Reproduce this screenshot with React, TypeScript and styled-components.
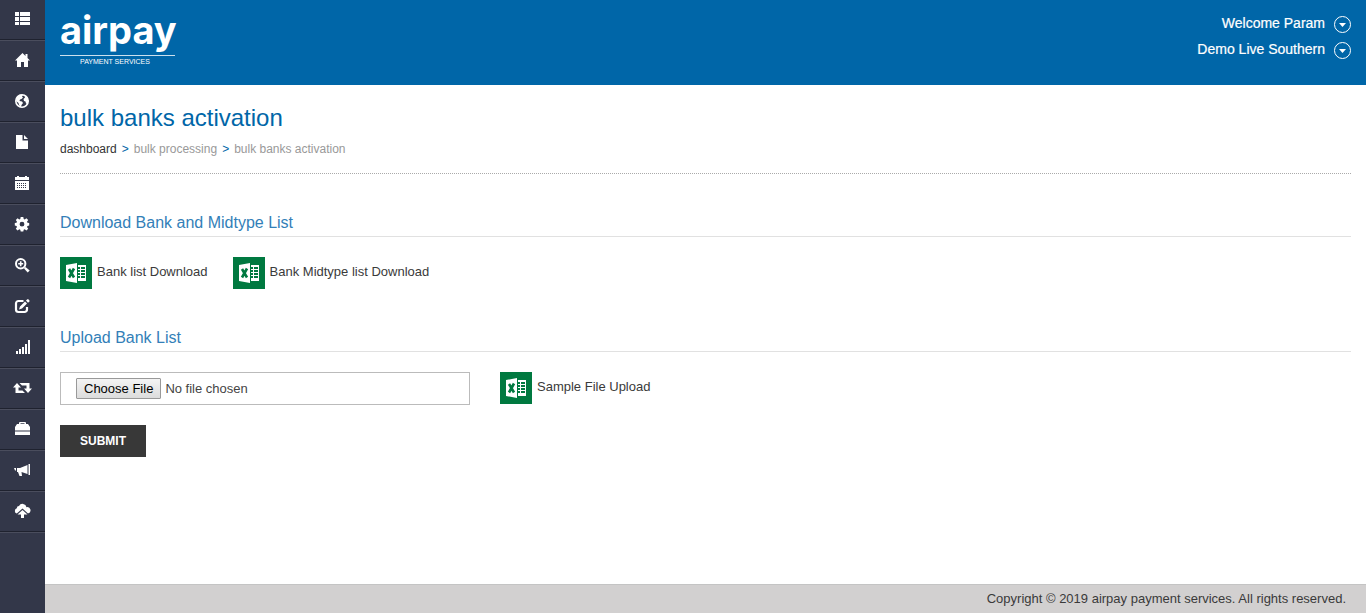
import React from "react";
import styled, { createGlobalStyle } from "styled-components";

const GlobalStyle = createGlobalStyle`
  *, *::before, *::after { box-sizing: border-box; }
  body {
    margin: 0;
    background: #fff;
    color: #3a3a3a;
    font: 13px/18px "Liberation Sans", Arial, Helvetica, sans-serif;
  }
  a { color: inherit; text-decoration: none; }
`;

const Page = styled.div`
  display: flex;
  min-height: 100vh;
`;

const Sidebar = styled.nav`
  flex: 0 0 45px;
  background: #333749;
`;

const MenuList = styled.ul`
  margin: 0;
  padding: 0;
  list-style: none;
  border-bottom: 1px solid #4a4d5d;
`;

const MenuItem = styled.li`
  border-top: 1px solid #4a4d5d;
  border-bottom: 1px solid #1f222f;
  &:first-child { border-top: 0; }
`;

const MenuLink = styled.a`
  display: flex;
  align-items: center;
  justify-content: center;
  height: 39px;
  padding-bottom: 2px;
  color: #fff;
  svg { overflow: visible; }
`;

const Column = styled.div`
  flex: 1;
  min-width: 0;
  display: flex;
  flex-direction: column;
`;

const Header = styled.header`
  display: flex;
  justify-content: space-between;
  min-height: 85px;
  padding: 11px 15px;
  background: #0066a8;
  color: #fff;
`;

const Logo = styled.a`
  display: block;
  height: 60px;
  svg { overflow: visible; }
`;

const Account = styled.div`
  display: flex;
  flex-direction: column;
  align-items: flex-end;
`;

const AccountButton = styled.button`
  display: flex;
  gap: 9px;
  height: 26px;
  padding: 3px 0 0;
  border: 0;
  background: none;
  color: inherit;
  font: 14px/18px "Liberation Sans", Arial, sans-serif;
  -webkit-text-stroke: 0.2px #fff;
  cursor: pointer;
  svg { margin-top: 2px; }
`;

const Main = styled.main`
  flex: 1;
  padding: 19px 15px 40px;
`;

const Title = styled.h1`
  margin: 0;
  color: #0066a8;
  font-size: 24px;
  font-weight: 400;
  line-height: 28px;
`;

const Crumbs = styled.nav`
  display: flex;
  gap: 5px;
  padding: 8px 0 15px;
  border-bottom: 1px dotted #aaa;
  color: #999;
  font-size: 12px;
  a { color: #333; }
  i { color: #0066a8; font-style: normal; }
`;

const Section = styled.section`
  padding-top: 39px;
`;

const SectionTitle = styled.h2`
  margin: 0 0 20px;
  padding-bottom: 3px;
  border-bottom: 1px solid #e1e1e1;
  color: #337fb8;
  font-size: 16px;
  font-weight: 400;
  line-height: 20px;
`;

const Row = styled.div<{ $gap: number }>`
  display: flex;
  gap: ${(p) => p.$gap}px;
`;

const SheetLink = styled.a`
  display: flex;
  gap: 5px;
  line-height: 30px;
`;

const FileInput = styled.input`
  width: 410px;
  height: 33px;
  padding: 5px 15px;
  border: 1px solid #bbb;
  background: #fff;
  color: #444;
  font: 13px/20px "Liberation Sans", Arial, sans-serif;
  &::file-selector-button {
    height: 21px;
    margin: 0 4px 0 0;
    padding: 0 7px;
    border: 1px solid #999;
    border-radius: 1px;
    background: linear-gradient(#f4f4f4, #dcdcdc);
    color: #000;
    font: 13px/19px "Liberation Sans", Arial, sans-serif;
  }
`;

const Submit = styled.button`
  margin-top: 20px;
  padding: 0 20px;
  height: 32px;
  border: 0;
  background: #383838;
  color: #fff;
  font: bold 12px/32px "Liberation Sans", Arial, sans-serif;
`;

const Footer = styled.footer`
  padding: 5px 20px;
  border-top: 1px solid #c4c4c4;
  background: #d2d0d0;
  text-align: right;
`;

const icons: [string, React.ReactNode][] = [
  ["Menu", <path d="M1 1h4v4H1zM6 1h10v4H6zM1 6h4v4H1zM6 6h10v4H6zM1 11h4v3H1zM6 11h10v3H6z" />],
  ["Home", <path d="M8.500 1 1 8.500h2V15h4v-5h3v5h4V8.500h2L13.500 6V2h-2v2z" />],
  ["Web", <><circle cx="8" cy="8" r="6.200" fill="none" stroke="currentColor" strokeWidth="1.600" /><path d="M3 4l3-2.500L9 2 8 3.500l1 1L7.500 6 6 6.500 5.500 8 8 8.500 9 10l-1.500 2L7 14.500 5 12 4.500 10 2 8zM10.500 2l3 2.500L14.500 8l-1 3-1.500-.5-.5-2L10 8l-.5-2L11 4.500z" /></>],
  ["Documents", <path d="M2 1h6.500v5.500H14V15H2zM10 1l4 4h-4z" />],
  ["Calendar", <path fillRule="evenodd" d="M1 2h2V1h2v1h6V1h2v1h2v3H1zM1 6h14v9H1zM3 8v1h1V8zm2 0v1h1V8zm2 0v1h1V8zm2 0v1h1V8zm2 0v1h1V8zM3 10v1h1v-1zm2 0v1h1v-1zm2 0v1h1v-1zm2 0v1h1v-1zm2 0v1h1v-1zM3 12v1h1v-1zm2 0v1h1v-1zm2 0v1h1v-1zm2 0v1h1v-1zm2 0v1h1v-1z" />],
  ["Settings", <path fillRule="evenodd" d="m6.700 1h2.600l.4 2 1 .4 1.700-1.100 1.800 1.800-1.200 1.700.5 1 1.700.3v2.500l-1.700.4-.5 1 1.200 1.700-1.800 1.800-1.700-1.200-1 .5-.4 1.700H6.700l-.4-1.700-1-.5-1.700 1.200-1.800-1.800L3 11l-.5-1-1.700-.4V7.100l1.700-.3.5-1-1.200-1.700 1.800-1.800 1.700 1.100 1-.4zM8 5.800a2.400 2.400 0 1 0 0 4.800 2.400 2.400 0 0 0 0-4.800z" />],
  ["Search", <><circle cx="6.700" cy="6.700" r="4.700" fill="none" stroke="currentColor" strokeWidth="2" /><path d="M5.900 4.200h1.600v1.700h1.700v1.600H7.500v1.700H5.900V7.500H4.200V5.900h1.700zM10 11.500l1.500-1.500 4.200 3.500-2 2z" /></>],
  ["Edit", <><path d="M9.500 3H4.500A2.500 2.500 0 0 0 2 5.500v6A2.500 2.500 0 0 0 4.500 14h6a2.500 2.500 0 0 0 2.500-2.500V9" fill="none" stroke="currentColor" strokeWidth="2.200" /><path d="m6 8.500 5-5 2 2-5 5-3 1zM12 2.500l1.300-1.300h1L15.500 2.500v1L14 4.800z" /></>],
  ["Reports", <path d="M2 12h2v3H2zM5 10h2v5H5zM8 8h2v7H8zM11 5h2v10h-2zM14 1h2v14h-2z" />],
  ["Transfers", <path d="M3 3-1 7.500h2.500V13H11L8.500 10.500h-4v-3H7zM5.500 3H15.500v5.500H18L14 13l-4-4.500h2.500v-3H8z" />],
  ["Business", <path fillRule="evenodd" d="M5 3V1.500L6 1h5l1 .5V3h2l2 3v3.500H1V6l2-3zM6.500 2.200V3h4v-.8zM1 10.500h15V14H1z" />],
  ["Campaigns", <path d="M14.500 2H16v11h-1.500zM13.500 3v9L7.500 10l.5 4H5.500L4 10H3V6h3zM0 6h2v2.500H1z" />],
  ["Upload", <path d="M2.800 10.500A2.700 2.700 0 0 1 2.800 5.300 2.300 2.300 0 0 1 5 3a4 4 0 0 1 7.500 1.200A3.200 3.200 0 0 1 14 10.500L8.500 5.500zM8.500 7 13.500 11.500H10V15H7v-3.500H3.500z" />],
];

const SheetIcon = () => (
  <svg width="32" height="32" viewBox="0 0 32 32" aria-hidden="true">
    <path fill="#007940" d="M0 0h32v32H0z" />
    <path fill="#fff" d="m6 8 11-2v20L6 24zM17 8h9v16h-9z" />
    <path fill="#007940" d="M17 6h1v20h-1zM18 10h2v2h-2zM21 10h4v2h-4zM18 13h2v2h-2zM21 13h4v2h-4zM18 16h2v2h-2zM21 16h4v2h-4zM18 19h2v2h-2zM21 19h4v2h-4z" />
    <path d="m9 12 5 8.500M14 11.500l-5 9" stroke="#007940" strokeWidth="2.600" />
  </svg>
);

const Chevron = () => (
  <svg width="17" height="17" viewBox="0 0 17 17" aria-hidden="true">
    <circle cx="8.500" cy="8.500" r="8" fill="none" stroke="#fff" />
    <path d="M5 7h7l-3.500 4z" fill="#fff" />
  </svg>
);

export default function App() {
  return (
    <>
      <GlobalStyle />
      <Page>
        <Sidebar aria-label="Main menu">
          <MenuList>
            {icons.map(([label, shape]) => (
              <MenuItem key={label}>
                <MenuLink href="#" aria-label={label}>
                  <svg width="17" height="16" viewBox="0 0 17 16" fill="currentColor">{shape}</svg>
                </MenuLink>
              </MenuItem>
            ))}
          </MenuList>
        </Sidebar>
        <Column>
          <Header>
            <Logo href="#" aria-label="airpay payment services">
              <svg width="120" height="60" viewBox="0 0 120 60" fill="#fff">
                <text x="0" y="33" fontFamily="Inter, sans-serif" fontWeight="700" fontSize="38">airpay</text>
                <path d="M0 44h115v1H0z" opacity=".8" />
                <text x="20" y="53" fontFamily="Liberation Sans, sans-serif" fontSize="7">PAYMENT SERVICES</text>
              </svg>
            </Logo>
            <Account>
              <AccountButton type="button">Welcome Param<Chevron /></AccountButton>
              <AccountButton type="button">Demo Live Southern<Chevron /></AccountButton>
            </Account>
          </Header>
          <Main>
            <Title>bulk banks activation</Title>
            <Crumbs aria-label="Breadcrumb">
              <a href="#">dashboard</a>
              <i>&gt;</i>
              <span>bulk processing</span>
              <i>&gt;</i>
              <span>bulk banks activation</span>
            </Crumbs>
            <Section>
              <SectionTitle>Download Bank and Midtype List</SectionTitle>
              <Row $gap={25}>
                <SheetLink href="#"><SheetIcon />Bank list Download</SheetLink>
                <SheetLink href="#"><SheetIcon />Bank Midtype list Download</SheetLink>
              </Row>
            </Section>
            <Section>
              <SectionTitle id="upload-title">Upload Bank List</SectionTitle>
              <Row $gap={30}>
                <FileInput type="file" aria-labelledby="upload-title" />
                <SheetLink href="#"><SheetIcon />Sample File Upload</SheetLink>
              </Row>
              <Submit type="submit">SUBMIT</Submit>
            </Section>
          </Main>
          <Footer>Copyright © 2019 airpay payment services. All rights reserved.</Footer>
        </Column>
      </Page>
    </>
  );
}
